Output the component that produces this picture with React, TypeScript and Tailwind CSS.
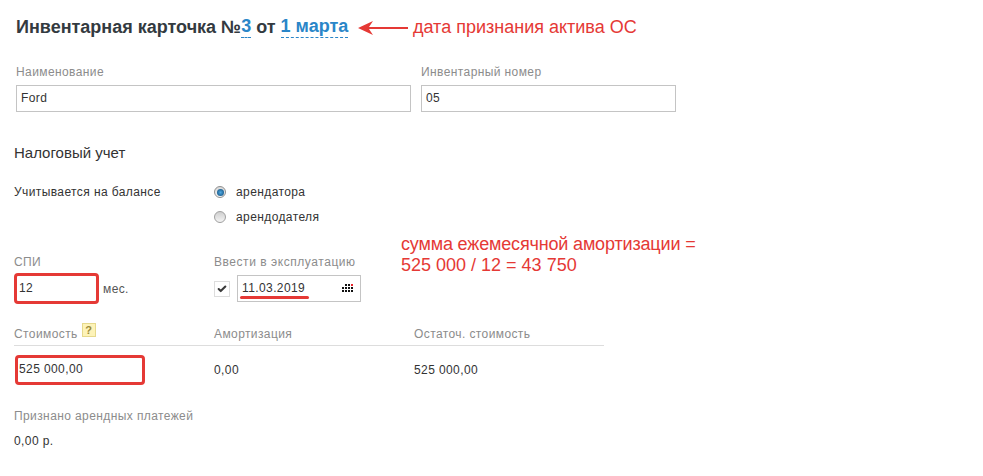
import { Check } from 'lucide-react'

function Label({ children }: { children: React.ReactNode }) {
  return <div className="text-[12px] leading-[14px] tracking-[0.4px] text-[#8c8c8c]">{children}</div>
}

function CalendarDots() {
  // dot grid of the date picker button
  const dots = []
  for (let row = 0; row < 3; row++) {
    for (let col = 0; col < 4; col++) {
      if (row === 0 && col === 0) continue
      dots.push(
        <rect key={`${row}-${col}`} x={col * 3} y={row * 3} width="2" height="2" fill={row === 0 && col === 3 ? '#e8232a' : '#111'} />,
      )
    }
  }
  return (
    <svg width="11" height="8" viewBox="0 0 11 8" className="absolute right-[7px] top-[8px]">
      {dots}
    </svg>
  )
}

export default function App() {
  return (
    <div className="w-[983px] h-[476px] bg-white relative overflow-hidden font-['Liberation_Sans',sans-serif] text-[12px] text-[#333]">
      <div className="pl-[14px] pt-[15px]">
        {/* Заголовок */}
        <div className="pl-[2px] h-[24px] flex items-center text-[18px] leading-[24px] font-bold text-[#333a40]">
          Инвентарная карточка №
          <span className="text-[#2a86c8] border-b border-dashed border-[#2a86c8] leading-[21px]">3</span>
          <span className="ml-[5px]">от</span>
          <span className="ml-[5px] text-[#2a86c8] border-b border-dashed border-[#2a86c8] leading-[21px]">1 марта</span>
        </div>

        <div className="pl-[2px] mt-[26px] flex gap-[10px]">
          <div>
            <Label>Наименование</Label>
            <div className="mt-[6px] w-[395px] h-[27px] border border-[#c4c4c4] pl-[4px] leading-[25px] tracking-[0.4px]">Ford</div>
          </div>
          <div>
            <Label>Инвентарный номер</Label>
            <div className="mt-[6px] w-[255px] h-[27px] border border-[#c4c4c4] pl-[4px] leading-[25px] tracking-[0.4px]">05</div>
          </div>
        </div>

        <div className="mt-[31px] text-[15px] leading-[20px] text-[#333]">Налоговый учет</div>

        {/* Баланс */}
        <div className="mt-[20px] flex h-[50px]">
          <div className="w-[200px] leading-[18px] tracking-[0.4px]">Учитывается на балансе</div>
          <div className="flex flex-col gap-[7px]">
            <div className="flex items-center h-[18px] gap-[10px]">
              <span className="w-[12px] h-[12px] rounded-full border border-[#8f8f8f] bg-linear-to-b from-[#d8d8d8] to-[#f6f6f6] flex items-center justify-center">
                <span className="w-[7px] h-[7px] rounded-full bg-radial from-[#4fa8e0] to-[#0b4a78]" />
              </span>
              <span className="tracking-[0.4px]">арендатора</span>
            </div>
            <div className="flex items-center h-[18px] gap-[10px]">
              <span className="w-[12px] h-[12px] rounded-full border border-[#a0a0a0] bg-linear-to-b from-[#cfcfcf] to-[#f4f4f4]" />
              <span className="tracking-[0.4px]">арендодателя</span>
            </div>
          </div>
        </div>

        {/* СПИ и ввод в эксплуатацию */}
        <div className="mt-[22px] flex">
          <div className="w-[200px]">
            <Label>СПИ</Label>
            <div className="mt-[6px] flex items-center h-[27px]">
              <div className="relative w-[85px] h-[27px] pl-[5px] leading-[27px] tracking-[0.4px]">
                12
                <div className="absolute left-[0px] -top-[2px] w-[85px] h-[31px] border-[3px] border-[#e53935] rounded-[4px]" />
              </div>
              <span className="ml-[4px] text-[#555] tracking-[0.4px]">мес.</span>
            </div>
          </div>
          <div>
            <div className="text-[12px] leading-[14px] tracking-[0.55px] text-[#8c8c8c]">Ввести в эксплуатацию</div>
            <div className="mt-[6px] flex items-center h-[27px]">
              <span className="w-[16px] h-[16px] border border-[#ddd] flex items-center justify-center">
                <Check size={10} strokeWidth={5} className="text-[#3a3a3a]" />
              </span>
              <div className="relative ml-[7px] w-[124px] h-[27px] border border-[#c4c4c4] pl-[4px] leading-[25px] tracking-[0.4px]">
                11.03.2019
                <CalendarDots />
                <div className="absolute left-[2px] top-[20px] w-[69px] h-[3px] bg-[#e53935] rounded-full" />
              </div>
            </div>
          </div>
        </div>

        {/* Стоимость */}
        <div className="mt-[22px] w-[590px] h-[22px] border-b border-[#ddd] flex text-[#8c8c8c] tracking-[0.4px]">
          <div className="w-[200px] flex items-start">
            <span className="mt-[3px] leading-[14px]">Стоимость</span>
            <span className="ml-[4px] -mt-[1px] w-[14px] h-[14px] bg-[#fdf3b8] border border-[#e6d98c] text-[#9a8a3a] text-[11px] font-bold leading-[12px] text-center tracking-normal">?</span>
          </div>
          <div className="w-[200px] mt-[3px] leading-[14px]">Амортизация</div>
          <div className="mt-[3px] leading-[14px]">Остаточ. стоимость</div>
        </div>
        <div className="mt-[9px] flex h-[29px] items-center tracking-[0.4px]">
          <div className="w-[200px]">
            <div className="relative w-[130px] h-[29px] pl-[5px] leading-[29px]">
              525 000,00
              <div className="absolute left-[1px] top-0 w-[130px] h-[30px] border-[3px] border-[#e53935] rounded-[4px]" />
            </div>
          </div>
          <div className="w-[200px]">0,00</div>
          <div>525 000,00</div>
        </div>

        <div className="mt-[25px]">
          <Label>Признано арендных платежей</Label>
        </div>
        <div className="mt-[11px] leading-[14px] tracking-[0.4px]">0,00 р.</div>
      </div>

      {/* Пометки поверх скриншота */}
      <svg width="50" height="16" viewBox="0 0 50 16" className="absolute left-[358px] top-[20px]">
        <path d="M0 8 L15 1 L11 7 L50 7 L50 9 L11 9 L15 15 Z" fill="#e53935" />
      </svg>
      <div className="absolute left-[413px] top-[16px] text-[18px] leading-[22px] text-[#e53935]">дата признания актива ОС</div>
      <div className="absolute left-[401px] top-[234px] text-[18px] leading-[21px] text-[#e53935]">
        <span className="tracking-[-0.16px]">сумма ежемесячной амортизации =</span>
        <br />
        525 000 / 12 = 43 750
      </div>
    </div>
  )
}
